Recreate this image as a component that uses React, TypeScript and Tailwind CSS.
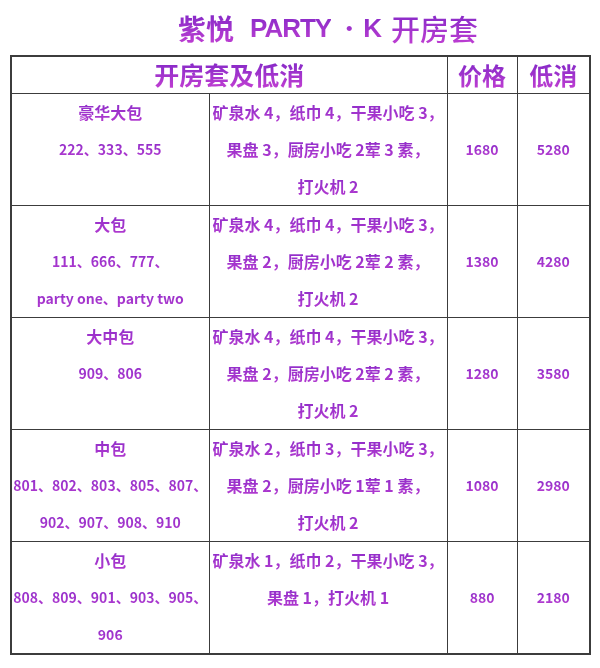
import React from "react";

type Row = {
  name: string;
  rooms: string[];
  items: string[];
  price: string;
  min: string;
};

const rows: Row[] = [
  {
    name: "豪华大包",
    rooms: ["222、333、555"],
    items: ["矿泉水 4，纸巾 4，干果小吃 3，", "果盘 3，厨房小吃 2荤 3 素，", "打火机 2"],
    price: "1680",
    min: "5280",
  },
  {
    name: "大包",
    rooms: ["111、666、777、", "party one、party two"],
    items: ["矿泉水 4，纸巾 4，干果小吃 3，", "果盘 2，厨房小吃 2荤 2 素，", "打火机 2"],
    price: "1380",
    min: "4280",
  },
  {
    name: "大中包",
    rooms: ["909、806"],
    items: ["矿泉水 4，纸巾 4，干果小吃 3，", "果盘 2，厨房小吃 2荤 2 素，", "打火机 2"],
    price: "1280",
    min: "3580",
  },
  {
    name: "中包",
    rooms: ["801、802、803、805、807、", "902、907、908、910"],
    items: ["矿泉水 2，纸巾 3，干果小吃 3，", "果盘 2，厨房小吃 1荤 1 素，", "打火机 2"],
    price: "1080",
    min: "2980",
  },
  {
    name: "小包",
    rooms: ["808、809、901、903、905、", "906"],
    items: ["矿泉水 1，纸巾 2，干果小吃 3，", "果盘 1，打火机 1"],
    price: "880",
    min: "2180",
  },
];

// purple text with a soft top-to-bottom gradient, one line at a time
function Grad({ children, className = "" }: { children: React.ReactNode; className?: string }) {
  return (
    <span
      className={`inline-block whitespace-nowrap bg-linear-to-b from-[#7f24c6] to-[#c23ed2] bg-clip-text text-transparent ${className}`}
    >
      {children}
    </span>
  );
}

const cell = "border-[1.5px] border-[#3c3c3c] p-0 text-center";

export default function App() {
  return (
    <div className="w-[600px] h-[668px] bg-white pl-[10px] pr-[11px] font-['Noto_Sans_CJK_SC',sans-serif] font-bold">
      {/* ---------- title ---------- */}
      <div className="h-[55px] flex items-center pl-[168px]">
        <Grad className="text-[28px] leading-[36px]">紫悦</Grad>
        <Grad className="ml-[16px] text-[26px] leading-[36px] font-['Liberation_Sans',sans-serif] tracking-[-1px]">
          PARTY
        </Grad>
        <Grad className="ml-[8px] text-[20px] leading-[36px]">•</Grad>
        <Grad className="ml-[4px] text-[26px] leading-[36px] font-['Liberation_Sans',sans-serif]">K</Grad>
        <Grad className="ml-[9px] text-[29px] leading-[36px] font-medium">开房套</Grad>
      </div>

      {/* ---------- table ---------- */}
      <table className="w-[579px] table-fixed border-collapse border-2 border-[#3c3c3c]">
        <colgroup>
          <col className="w-[198px]" />
          <col className="w-[238px]" />
          <col className="w-[70px]" />
          <col className="w-[73px]" />
        </colgroup>
        <thead>
          <tr className="h-[37px]">
            <th colSpan={2} className={cell}>
              <Grad className="text-[25px] leading-[30px] font-semibold">开房套及低消</Grad>
            </th>
            <th className={cell}>
              <Grad className="text-[24px] leading-[30px] font-semibold">价格</Grad>
            </th>
            <th className={cell}>
              <Grad className="text-[24px] leading-[30px] font-semibold">低消</Grad>
            </th>
          </tr>
        </thead>
        <tbody>
          {rows.map((r) => (
            <tr key={r.name} className="h-[112px]">
              <td className={`${cell} align-top`}>
                <div className="leading-[37px] text-[16px]">
                  <Grad>{r.name}</Grad>
                </div>
                {r.rooms.map((line) => (
                  <div key={line} className="leading-[37px] text-[14px]">
                    <Grad>{line}</Grad>
                  </div>
                ))}
              </td>
              <td className={`${cell} align-top`}>
                {r.items.map((line) => (
                  <div key={line} className="leading-[37px] text-[16px]">
                    <Grad>{line}</Grad>
                  </div>
                ))}
              </td>
              <td className={`${cell} align-middle text-[14px]`}>
                <Grad>{r.price}</Grad>
              </td>
              <td className={`${cell} align-middle text-[14px]`}>
                <Grad>{r.min}</Grad>
              </td>
            </tr>
          ))}
        </tbody>
      </table>
    </div>
  );
}
